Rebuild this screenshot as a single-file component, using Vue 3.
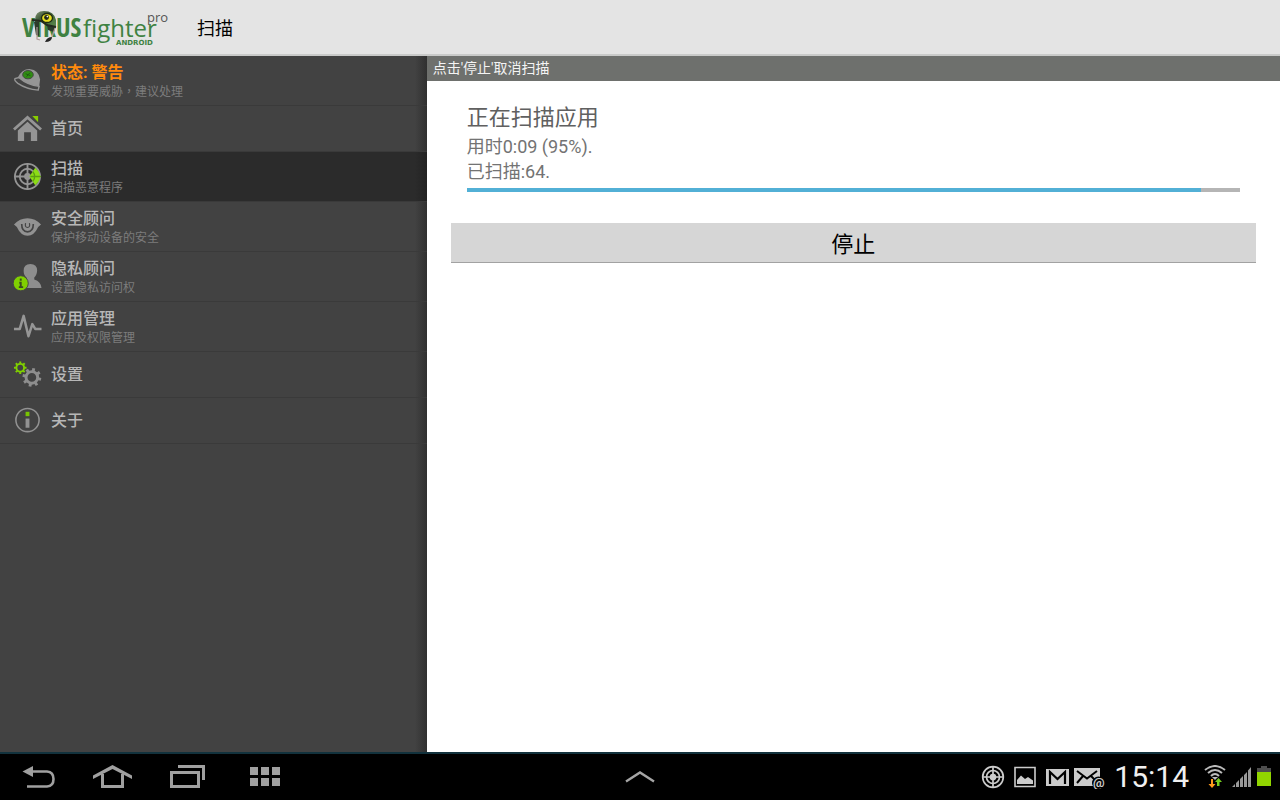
<script setup>
const items = [
  { id: 'status', title: '状态: 警告', sub: '发现重要威胁，建议处理', warn: true },
  { id: 'home', title: '首页' },
  { id: 'scan', title: '扫描', sub: '扫描恶意程序', active: true },
  { id: 'security', title: '安全顾问', sub: '保护移动设备的安全' },
  { id: 'privacy', title: '隐私顾问', sub: '设置隐私访问权' },
  { id: 'apps', title: '应用管理', sub: '应用及权限管理' },
  { id: 'settings', title: '设置' },
  { id: 'about', title: '关于' },
]
const progress = 95
const teeth = [0, 45, 90, 135, 180, 225, 270, 315]
</script>

<template>
  <div class="app">
    <header class="topbar">
      <svg class="logo" viewBox="0 0 150 44" role="img" aria-label="VIRUSfighter pro Android">
        <defs>
          <linearGradient id="helmet" x1="0" y1="0" x2="1" y2="1">
            <stop offset="0" stop-color="#8b9a7c" />
            <stop offset=".35" stop-color="#3f5a38" />
            <stop offset="1" stop-color="#5b8a4c" />
          </linearGradient>
        </defs>
        <text x="1" y="32" class="logo-bold">VIRUS</text>
        <text x="62" y="32" class="logo-light">fighter</text>
        <path d="M13 17 L18 17 L18 31 L15 30Z M26 20 L35 21 L33 27 L27 25Z" fill="#2c3b2a" />
        <path d="M14 15 Q14 6 23 6 Q33 6 35 15 L35 22 Q29 22 23 17 L14 17Z" fill="url(#helmet)" />
        <path d="M11 15 L20 16 L26 20 L35 22" fill="none" stroke="#242a20" stroke-width="2" />
        <ellipse cx="26" cy="13" rx="5.5" ry="4.5" fill="#e7df20" stroke="#202b13" stroke-width="1.3" />
        <circle cx="25.5" cy="12.5" r="2.4" fill="#222917" />
        <circle cx="26.3" cy="11.6" r=".8" fill="#fff" />
        <path d="M16 22 L16 34 L19 35 M34 23 L31 32" fill="none" stroke="#b39d9a" stroke-width="1.2" />
        <path d="M24 37 Q26 32 31 32 Q31 37 24 37Z" fill="#262626" />
        <text x="126" y="17" class="logo-pro">pro</text>
        <text x="95" y="40" class="logo-os">ANDROID</text>
      </svg>
      <h1>扫描</h1>
    </header>

    <div class="body">
      <nav class="side">
        <a v-for="it in items" :key="it.id" href="#" class="item" :class="{ active: it.active, warn: it.warn, tall: it.sub }">
          <svg class="icon" viewBox="0 0 30 30" aria-hidden="true">
            <g v-if="it.id === 'status'">
              <path d="M5 12 Q9 3 17 3 Q27 4 28 14 L27 22 Q17 21 5 12Z" fill="#959595" />
              <path d="M2 13 Q1 15 5 18 Q14 24 26 25 L27 21 Q15 20 6 12Z" fill="#444" stroke="#959595" stroke-width="1.400" />
              <ellipse cx="15.500" cy="9" rx="5.500" ry="4.300" fill="#2f8c12" stroke="#444" />
              <path d="M13 8 L18 10 M17.500 7 L14 11" stroke="#205c12" />
            </g>
            <g v-else-if="it.id === 'home'">
              <path d="M20 2 H26 V8.500Z" fill="#8c0" />
              <path d="M1 16 L15 3.500 L29 16" fill="none" stroke="#959595" stroke-width="3" />
              <path d="M5 17 L15 8 L25 17 V28 H18.500 V19 H11.500 V28 H5Z" fill="#959595" />
            </g>
            <g v-else-if="it.id === 'scan'">
              <g fill="none" stroke="#949494" stroke-width="1.900">
                <circle cx="15" cy="15" r="13" />
                <circle cx="15" cy="15" r="8" />
                <path d="M15 1 V29 M1 15 H29" />
              </g>
              <circle cx="15" cy="15" r="3.500" fill="#949494" />
              <path d="M17 15 L23 6 Q33 15 23 24Z" fill="#8cdc16" />
              <path d="M20.500 10 Q24.500 15 20.500 20 M18 15 H29" fill="none" stroke="#5c9e12" stroke-width="1.300" />
            </g>
            <g v-else-if="it.id === 'security'">
              <path d="M1 13 Q7 6.500 15 6.500 Q23 6.500 29 13 L26 15.500 Q22 24.500 15 24.500 Q8 24.500 4 15.500Z" fill="#929292" />
              <path d="M9 12.500 Q9 20.500 15 20.500 Q21 20.500 21 12.500" fill="none" stroke="#444" stroke-width="1.700" />
              <path d="M13 11.500 Q12 16 15 16 Q18 16 17 11.500" fill="none" stroke="#444" stroke-width="1.200" />
            </g>
            <g v-else-if="it.id === 'privacy'">
              <path d="M11 9 Q11 2 18 2 Q25 2 25 9 Q24.500 14 22 16 V18 Q29 20 29.500 27 H14 V16 Q11 14 11 9Z" fill="#8e8e8e" />
              <circle cx="8" cy="22" r="7.800" fill="#80d000" stroke="#444" />
              <path d="M8 17 V19.500 M6.500 21.500 H8 V26 M6 26 H10.500" fill="none" stroke="#3b4b20" stroke-width="2" />
            </g>
            <path v-else-if="it.id === 'apps'" d="M1 17.500 H7 L11 4 L16 25 L20 12.500 L23 17.500 H29.500" fill="none" stroke="#969696" stroke-width="2.600" stroke-linejoin="round" />
            <g v-else-if="it.id === 'settings'">
              <g transform="translate(7.500 8)" stroke="#80d000" fill="none" stroke-width="2">
                <circle r="4" />
                <path v-for="a in teeth" :key="a" d="M0 -4.500 V-6.500" :transform="`rotate(${a})`" />
              </g>
              <g transform="translate(19.500 18)" stroke="#8e8e8e" fill="none" stroke-width="3">
                <circle r="6" />
                <path v-for="a in teeth" :key="a" d="M0 -6.500 V-9.700" :transform="`rotate(${a + 12})`" />
              </g>
            </g>
            <g v-else>
              <circle cx="15" cy="14.500" r="12" fill="none" stroke="#929292" stroke-width="1.600" />
              <path d="M15 13 V22.500" stroke="#929292" stroke-width="4" />
              <path d="M15 6 V10.500" stroke="#78c400" stroke-width="4" />
            </g>
          </svg>
          <span class="labels">
            <span class="title">{{ it.title }}</span>
            <span v-if="it.sub" class="sub">{{ it.sub }}</span>
          </span>
        </a>
      </nav>

      <main class="main">
        <p class="hint">点击'停止'取消扫描</p>
        <section class="scan">
          <h2>正在扫描应用</h2>
          <p>用时0:09 (95%).</p>
          <p>已扫描:64.</p>
          <div class="track" role="progressbar" aria-label="正在扫描应用" :aria-valuenow="progress" aria-valuemin="0" aria-valuemax="100">
            <div class="fill" :style="{ width: progress + '%' }"></div>
          </div>
        </section>
        <button class="stop" type="button">停止</button>
      </main>
    </div>

    <footer class="sysbar">
      <div class="keys">
        <button type="button" aria-label="返回">
          <svg viewBox="0 0 40 32"><path d="M14 10.500 H30 Q36.500 11 36.500 18 Q36.500 25 30 25.500 H10" fill="none" stroke="#a0a0a0" stroke-width="2.600" /><path d="M5.500 10.500 L16 5 V16Z" fill="#a0a0a0" /></svg>
        </button>
        <button type="button" aria-label="主屏幕">
          <svg viewBox="0 0 40 32"><path d="M1 18 V14.500 L20.500 4 L40 14.500 V18 L20.500 8Z" fill="#a0a0a0" /><path d="M10.500 13 V25.500 H30.500 V13" fill="none" stroke="#a0a0a0" stroke-width="3" /></svg>
        </button>
        <button type="button" aria-label="最近任务">
          <svg viewBox="0 0 40 32"><path d="M11 5.500 H36.500 V19" fill="none" stroke="#a0a0a0" stroke-width="3" /><path d="M4.500 11.500 H31.500 V25.500 H4.500Z" fill="none" stroke="#a0a0a0" stroke-width="3" /></svg>
        </button>
        <button type="button" aria-label="应用">
          <svg viewBox="0 0 40 32"><path d="M8 6 h8 v8 h-8Z M19 6 h8 v8 h-8Z M30 6 h8 v8 h-8Z M8 17 h8 v8 h-8Z M19 17 h8 v8 h-8Z M30 17 h8 v8 h-8Z" fill="#a0a0a0" /></svg>
        </button>
      </div>
      <button class="up" type="button" aria-label="展开">
        <svg viewBox="0 0 32 16"><path d="M2 12.500 L16 3.500 L30 12.500" fill="none" stroke="#a5a5a5" stroke-width="2.400" /></svg>
      </button>
      <div class="status">
        <div class="notes">
          <svg class="s24" viewBox="0 0 24 24" fill="none" stroke="#ccc" stroke-width="1.700">
            <circle cx="12" cy="12" r="10.300" /><circle cx="12" cy="12" r="6.500" /><circle cx="12" cy="12" r="2.500" fill="#ccc" /><path d="M12 1 V23 M1 12 H23" />
          </svg>
          <svg class="s24" viewBox="0 0 24 24"><path d="M2 2.500 H22 V21.500 H2Z" fill="none" stroke="#ccc" stroke-width="1.600" /><path d="M4 19 V15 L8 10.500 L12 14 L15 12 L20 15.500 V19Z" fill="#ccc" /></svg>
          <svg class="s24" viewBox="0 0 24 24"><path d="M1 4 H24 V21 H1Z" fill="#ccc" /><path d="M5 19 V7 L12.500 14 L20 7 V19" fill="none" stroke="#000" stroke-width="2.200" /></svg>
          <svg class="mail" viewBox="0 0 32 24">
            <path d="M1 3 H27 V21 H1Z" fill="#ccc" /><path d="M4 6 L14 13.500 L24 6 M4 18 L10 11 M18 11 L24 17" fill="none" stroke="#000" stroke-width="2" />
            <circle cx="25.500" cy="18" r="6.500" fill="#000" />
            <text x="20" y="22" class="at">@</text>
          </svg>
        </div>
        <time>15:14</time>
        <div class="radios">
          <svg class="s24" viewBox="0 0 24 24">
            <g fill="none" stroke="#bbb" stroke-width="2"><path d="M2 5 Q12 -3 22 5 M5 8 Q12 2 19 8 M8 11 Q12 7 16 11" /></g>
            <path d="M9 12 H15 L12 15Z" fill="#bbb" />
            <path d="M8 14 V19 H5.500 L9 23 L12.500 19 H10 V14Z" fill="#ff9a1c" /><path d="M14 21 V17 H12 L15.500 13 L19 17 H16.500 V21Z" fill="#76cf20" />
          </svg>
          <svg class="signal" viewBox="0 0 20 24"><path d="M0 22 L3 19 V22Z M4 18 L7 15 V22 H4Z M8 14 L11 11 V22 H8Z M12 10 L15 7 V22 H12Z M16 5.500 L19 2 V22 H16Z" fill="#999" /></svg>
          <svg class="battery" viewBox="0 0 14 24"><path d="M4 1 H10 V3 H14 V7 H0 V3 H4Z" fill="#4d4d4d" /><path d="M0 7 H14 V21 H0Z" fill="#91d500" /></svg>
        </div>
      </div>
    </footer>
  </div>
</template>

<style>
body {
  background: #000;
}
</style>

<style scoped>
.app {
  display: flex;
  flex-direction: column;
  min-height: 100vh;
  font-family: Roboto, "Noto Sans CJK SC", sans-serif;
}
h1, h2, p {
  margin: 0;
  font-weight: 400;
}
button {
  padding: 0;
  border: 0;
  background: none;
  font-family: inherit;
}
svg {
  display: block;
  flex: none;
}
.topbar {
  display: flex;
  align-items: center;
  gap: 26px;
  box-sizing: border-box;
  height: 56px;
  padding-left: 21px;
  background: #e4e4e4;
  border-bottom: 2px solid #c9cac9;
}
.logo {
  width: 150px;
  height: 44px;
}
.logo-bold {
  font: 700 26px "Open Sans Condensed", "Liberation Sans Narrow", sans-serif;
  fill: #3f8242;
}
.logo-light {
  font: 400 24px "Open Sans", sans-serif;
  fill: #3f8242;
}
.logo-pro {
  font: 400 13px "Open Sans", sans-serif;
  fill: #555;
}
.logo-os {
  font: 700 7px "DejaVu Sans", sans-serif;
  fill: #3f8242;
}
h1 {
  font-size: 18px;
  color: #000;
}
.body {
  flex: 1;
  display: grid;
  grid-template-columns: 1fr 2fr;
}
.side {
  background: linear-gradient(to left, #303030, #424242 12px);
}
.item {
  display: flex;
  align-items: center;
  gap: 9px;
  box-sizing: border-box;
  height: 46px;
  padding-left: 13px;
  border-bottom: 1px solid #3a3a3a;
  color: #b7b7b7;
  text-decoration: none;
}
.item.tall {
  height: 50px;
}
.item.active {
  background: linear-gradient(to left, #222, #2b2b2b 12px);
}
.icon {
  width: 29px;
  height: 29px;
}
.labels {
  display: flex;
  flex-direction: column;
}
.tall .labels {
  padding-top: 2px;
}
.title {
  font-size: 16px;
  line-height: 22px;
  font-weight: 500;
}
.sub {
  font-size: 12px;
  line-height: 17px;
  color: #7c7c7c;
}
.warn .title {
  color: #ff8a0d;
  font-weight: 700;
}
.warn .sub {
  font-family: Roboto, "Noto Sans CJK TC", sans-serif;
}
.main {
  background: #fff;
}
.hint {
  padding-left: 6px;
  background: #6e706d;
  color: #f4f4f4;
  font-size: 14px;
  line-height: 25px;
}
.scan {
  padding: 20px 40px 0;
  color: #737373;
  font-size: 18px;
  line-height: 25px;
}
h2 {
  color: #606060;
  font-size: 22px;
  line-height: 33px;
}
.track {
  height: 4px;
  margin-top: 4px;
  background: #b5b5b5;
}
.fill {
  height: 4px;
  background: #52b0d6;
}
.stop {
  display: block;
  width: calc(100% - 48px);
  height: 40px;
  margin: 31px 24px 0;
  padding-bottom: 2px;
  background: #d6d6d6;
  border-bottom: 1px solid #a2a2a2;
  color: #000;
  font-size: 22px;
}
.sysbar {
  display: grid;
  grid-template-columns: 1fr auto 1fr;
  align-items: center;
  box-sizing: border-box;
  height: 48px;
  border-top: 2px solid #12323d;
  background: #000;
}
.keys {
  display: flex;
  gap: 35px;
  padding-left: 17px;
}
.keys svg {
  width: 40px;
  height: 32px;
}
.up svg {
  width: 32px;
  height: 16px;
}
.status,
.notes,
.radios {
  display: flex;
  align-items: center;
}
.status {
  justify-content: flex-end;
  padding-right: 9px;
}
.notes {
  gap: 8px;
}
.notes .mail {
  margin-left: -4px;
}
.radios {
  gap: 5px;
}
.s24 {
  width: 24px;
  height: 24px;
}
.mail {
  width: 32px;
  height: 24px;
}
.signal {
  width: 20px;
  height: 24px;
}
.battery {
  width: 14px;
  height: 24px;
}
.at {
  font: 700 13px Roboto, sans-serif;
  fill: #ccc;
}
time {
  padding: 0 14px 0 9px;
  color: #f0f0f0;
  font-size: 30px;
  line-height: 36px;
}
</style>
